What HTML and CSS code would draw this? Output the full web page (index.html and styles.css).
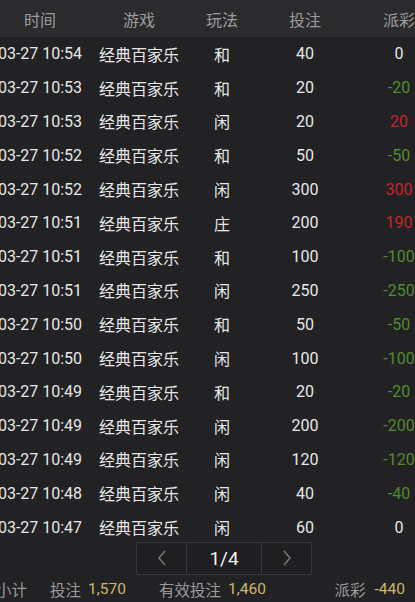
FILE: index.html
```html
<!DOCTYPE html>
<html lang="zh">
<head>
<meta charset="utf-8">
<link rel="stylesheet" href="styles.css">
</head>
<body>
<div class="page">
  <div class="table">
    <div class="row head">
      <div>时间</div><div>游戏</div><div>玩法</div><div>投注</div><div>派彩</div>
    </div>
    <div class="row"><div>03-27 10:54</div><div>经典百家乐</div><div>和</div><div>40</div><div>0</div></div>
    <div class="row"><div>03-27 10:53</div><div>经典百家乐</div><div>和</div><div>20</div><div class="lose">-20</div></div>
    <div class="row"><div>03-27 10:53</div><div>经典百家乐</div><div>闲</div><div>20</div><div class="win">20</div></div>
    <div class="row"><div>03-27 10:52</div><div>经典百家乐</div><div>和</div><div>50</div><div class="lose">-50</div></div>
    <div class="row"><div>03-27 10:52</div><div>经典百家乐</div><div>闲</div><div>300</div><div class="win">300</div></div>
    <div class="row"><div>03-27 10:51</div><div>经典百家乐</div><div>庄</div><div>200</div><div class="win">190</div></div>
    <div class="row"><div>03-27 10:51</div><div>经典百家乐</div><div>和</div><div>100</div><div class="lose">-100</div></div>
    <div class="row"><div>03-27 10:51</div><div>经典百家乐</div><div>闲</div><div>250</div><div class="lose">-250</div></div>
    <div class="row"><div>03-27 10:50</div><div>经典百家乐</div><div>和</div><div>50</div><div class="lose">-50</div></div>
    <div class="row"><div>03-27 10:50</div><div>经典百家乐</div><div>闲</div><div>100</div><div class="lose">-100</div></div>
    <div class="row"><div>03-27 10:49</div><div>经典百家乐</div><div>和</div><div>20</div><div class="lose">-20</div></div>
    <div class="row"><div>03-27 10:49</div><div>经典百家乐</div><div>闲</div><div>200</div><div class="lose">-200</div></div>
    <div class="row"><div>03-27 10:49</div><div>经典百家乐</div><div>闲</div><div>120</div><div class="lose">-120</div></div>
    <div class="row"><div>03-27 10:48</div><div>经典百家乐</div><div>闲</div><div>40</div><div class="lose">-40</div></div>
    <div class="row"><div>03-27 10:47</div><div>经典百家乐</div><div>闲</div><div>60</div><div>0</div></div>
  </div>
  <div class="pager-wrap">
    <div class="pager">
      <div class="pbtn">
        <svg width="10" height="18" viewBox="0 0 10 18"><path d="M8 2 L2 9 L8 16" fill="none" stroke="#7a7a7c" stroke-width="1.4"/></svg>
      </div>
      <div class="pnum">1/4</div>
      <div class="pbtn">
        <svg width="10" height="18" viewBox="0 0 10 18"><path d="M2 2 L8 9 L2 16" fill="none" stroke="#7a7a7c" stroke-width="1.4"/></svg>
      </div>
    </div>
  </div>
  <div class="footer">
    <span class="flabel first">小计</span>
    <span class="flabel">投注</span><span class="fval">1,570</span>
    <span class="flabel mid">有效投注</span><span class="fval">1,460</span>
    <span class="flabel right">派彩</span><span class="fval">-440</span>
  </div>
</div>
</body>
</html>
```

FILE: styles.css
```css
html, body {
  margin: 0;
  padding: 0;
  background: #222224;
  overflow: hidden;
}
.page {
  width: 415px;
  height: 602px;
  overflow: hidden;
  font-family: Roboto, "Noto Sans CJK SC", sans-serif;
  color: #e6e6e6;
  display: flex;
  flex-direction: column;
}
.table {
  margin-left: -12px;
  width: 458px;
}
.row {
  display: grid;
  grid-template-columns: 104px 94px 72px 94px 94px;
  height: 33.8px;
  align-items: center;
  font-size: 16px;
  white-space: nowrap;
}
.row > div {
  text-align: center;
}
.row.head {
  height: 37px;
  background: #2b2b2d;
  color: #9a9a9c;
}
.win { color: #c4242a; }
.lose { color: #4f8a2c; }
.pager-wrap {
  display: flex;
  padding-left: 136px;
  margin-top: -2px;
  height: 33px;
}
.pager {
  display: flex;
  border: 1px solid #38383a;
  background: #1f1f21;
  height: 31px;
}
.pbtn {
  width: 49px;
  display: flex;
  align-items: center;
  justify-content: center;
}
.pnum {
  width: 74px;
  border-left: 1px solid #38383a;
  border-right: 1px solid #38383a;
  display: flex;
  align-items: center;
  justify-content: center;
  font-size: 19px;
  color: #f0f0f0;
}
.footer {
  flex: 1;
  display: flex;
  align-items: center;
  font-size: 15.5px;
  color: #9a9a9c;
  white-space: nowrap;
  margin-left: -4px;
  padding-top: 2px;
}
.flabel { margin-right: 7px; }
.flabel.first { margin-right: 23px; }
.flabel.mid { margin-left: 33px; }
.flabel.right { margin-left: auto; margin-right: 9px; }
.fval { color: #c9b86c; }
.fval:last-child { margin-right: 10px; }
```
